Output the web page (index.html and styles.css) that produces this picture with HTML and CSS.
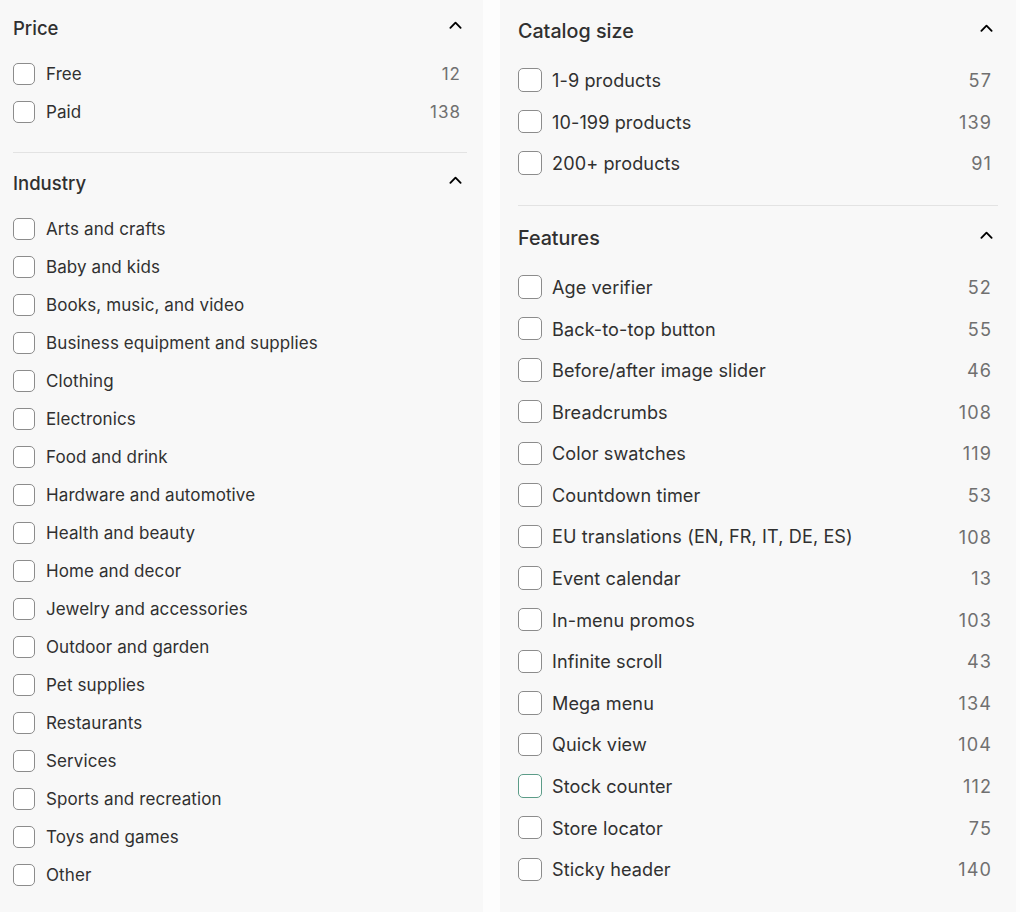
FILE: index.html
```html
<!DOCTYPE html>
<html lang="en">
<head>
    <meta charset="UTF-8">
    <meta name="viewport" content="width=device-width, initial-scale=1.0">
    <title>Filters</title>
    <link rel="stylesheet" href="styles.css">
</head>
<body>

    <div class="page">
        <div class="panel">
            <div class="group">
                <div class="head">
                    <span>Price</span>
                    <svg class="chevron" viewBox="0 0 14 8"><polyline points="1.5,7 7,1.5 12.5,7"/></svg>
                </div>
                <ul class="options">
                    <li><label><input type="checkbox"><span class="name">Free</span><span class="count">12</span></label></li>
                    <li><label><input type="checkbox"><span class="name">Paid</span><span class="count">138</span></label></li>
                </ul>
            </div>
            <div class="group">
                <div class="head">
                    <span>Industry</span>
                    <svg class="chevron" viewBox="0 0 14 8"><polyline points="1.5,7 7,1.5 12.5,7"/></svg>
                </div>
                <ul class="options">
                    <li><label><input type="checkbox"><span class="name">Arts and crafts</span></label></li>
                    <li><label><input type="checkbox"><span class="name">Baby and kids</span></label></li>
                    <li><label><input type="checkbox"><span class="name">Books, music, and video</span></label></li>
                    <li><label><input type="checkbox"><span class="name">Business equipment and supplies</span></label></li>
                    <li><label><input type="checkbox"><span class="name">Clothing</span></label></li>
                    <li><label><input type="checkbox"><span class="name">Electronics</span></label></li>
                    <li><label><input type="checkbox"><span class="name">Food and drink</span></label></li>
                    <li><label><input type="checkbox"><span class="name">Hardware and automotive</span></label></li>
                    <li><label><input type="checkbox"><span class="name">Health and beauty</span></label></li>
                    <li><label><input type="checkbox"><span class="name">Home and decor</span></label></li>
                    <li><label><input type="checkbox"><span class="name">Jewelry and accessories</span></label></li>
                    <li><label><input type="checkbox"><span class="name">Outdoor and garden</span></label></li>
                    <li><label><input type="checkbox"><span class="name">Pet supplies</span></label></li>
                    <li><label><input type="checkbox"><span class="name">Restaurants</span></label></li>
                    <li><label><input type="checkbox"><span class="name">Services</span></label></li>
                    <li><label><input type="checkbox"><span class="name">Sports and recreation</span></label></li>
                    <li><label><input type="checkbox"><span class="name">Toys and games</span></label></li>
                    <li><label><input type="checkbox"><span class="name">Other</span></label></li>
                </ul>
            </div>
        </div>

        <div class="panel large">
            <div class="group">
                <div class="head">
                    <span>Catalog size</span>
                    <svg class="chevron" viewBox="0 0 14 8"><polyline points="1.5,7 7,1.5 12.5,7"/></svg>
                </div>
                <ul class="options">
                    <li><label><input type="checkbox"><span class="name">1-9 products</span><span class="count">57</span></label></li>
                    <li><label><input type="checkbox"><span class="name">10-199 products</span><span class="count">139</span></label></li>
                    <li><label><input type="checkbox"><span class="name">200+ products</span><span class="count">91</span></label></li>
                </ul>
            </div>
            <div class="group">
                <div class="head">
                    <span>Features</span>
                    <svg class="chevron" viewBox="0 0 14 8"><polyline points="1.5,7 7,1.5 12.5,7"/></svg>
                </div>
                <ul class="options">
                    <li><label><input type="checkbox"><span class="name">Age verifier</span><span class="count">52</span></label></li>
                    <li><label><input type="checkbox"><span class="name">Back-to-top button</span><span class="count">55</span></label></li>
                    <li><label><input type="checkbox"><span class="name">Before/after image slider</span><span class="count">46</span></label></li>
                    <li><label><input type="checkbox"><span class="name">Breadcrumbs</span><span class="count">108</span></label></li>
                    <li><label><input type="checkbox"><span class="name">Color swatches</span><span class="count">119</span></label></li>
                    <li><label><input type="checkbox"><span class="name">Countdown timer</span><span class="count">53</span></label></li>
                    <li><label><input type="checkbox"><span class="name">EU translations (EN, FR, IT, DE, ES)</span><span class="count">108</span></label></li>
                    <li><label><input type="checkbox"><span class="name">Event calendar</span><span class="count">13</span></label></li>
                    <li><label><input type="checkbox"><span class="name">In-menu promos</span><span class="count">103</span></label></li>
                    <li><label><input type="checkbox"><span class="name">Infinite scroll</span><span class="count">43</span></label></li>
                    <li><label><input type="checkbox"><span class="name">Mega menu</span><span class="count">134</span></label></li>
                    <li><label><input type="checkbox"><span class="name">Quick view</span><span class="count">104</span></label></li>
                    <li><label><input type="checkbox" class="hover"><span class="name">Stock counter</span><span class="count">112</span></label></li>
                    <li><label><input type="checkbox"><span class="name">Store locator</span><span class="count">75</span></label></li>
                    <li><label><input type="checkbox"><span class="name">Sticky header</span><span class="count">140</span></label></li>
                </ul>
            </div>
        </div>
    </div>

</body>
</html>
```

FILE: styles.css
```css
body {
    margin: 0;
    background-color: #fdfdfd;
    font-family: Inter, "Liberation Sans", sans-serif;
    color: #303030;
}

.page {
    display: flex;
    gap: 17px;
    height: 912px;
    overflow: hidden;
}

/* sizes for the small panel, the large one overrides them */
.panel {
    --text: 17px;
    --title: 18.5px;
    --head: 24px;
    --head-gap: 15px;
    --row: 38px;
    --box: 22px;
    --box-gap: 11px;
    --first-top: 16px;
    --top: 18px;
    --bottom: 21px;

    width: 454px;
    padding: 0 16px 0 13px;
    background-color: #f8f8f8;
}

.panel.large {
    --text: 18.1px;
    --title: 19.7px;
    --head: 26px;
    --head-gap: 15.2px;
    --row: 41.6px;
    --box: 23.5px;
    --box-gap: 10.5px;
    --first-top: 18px;
    --top: 19px;
    --bottom: 21px;

    width: 480px;
    padding: 0 18px;
}

.group {
    padding: var(--top) 0 var(--bottom) 0;
    border-bottom: 1px solid #e3e3e3;
}

.group:first-child {
    padding-top: var(--first-top);
}

.group:last-child {
    border-bottom: none;
}

.head {
    display: flex;
    align-items: center;
    justify-content: space-between;
    height: var(--head);
    margin-bottom: var(--head-gap);
    font-size: var(--title);
    font-weight: 500;
    line-height: var(--head);
}

.chevron {
    width: 13px;
    height: 8px;
    margin-right: 5px;
    margin-top: -6px;
    fill: none;
    stroke: #000;
    stroke-width: 2;
    stroke-linecap: round;
    stroke-linejoin: round;
}

.options {
    list-style: none;
    margin: 0;
    padding: 0;
}

.options label {
    display: flex;
    align-items: center;
    height: var(--row);
    padding-right: 6px;
    font-size: var(--text);
    letter-spacing: 0.1px;
}

.options input {
    appearance: none;
    -webkit-appearance: none;
    flex: none;
    width: var(--box);
    height: var(--box);
    margin: 0 var(--box-gap) 0 0;
    border: 1px solid #8c8c8c;
    border-radius: 5px;
    background-color: #fff;
    box-sizing: border-box;
}

.options input.hover {
    border-color: #5c9c88;
}

.name {
    flex: 1;
    line-height: 1;
}

.count {
    color: #707070;
    letter-spacing: 0.06em;
}
```
